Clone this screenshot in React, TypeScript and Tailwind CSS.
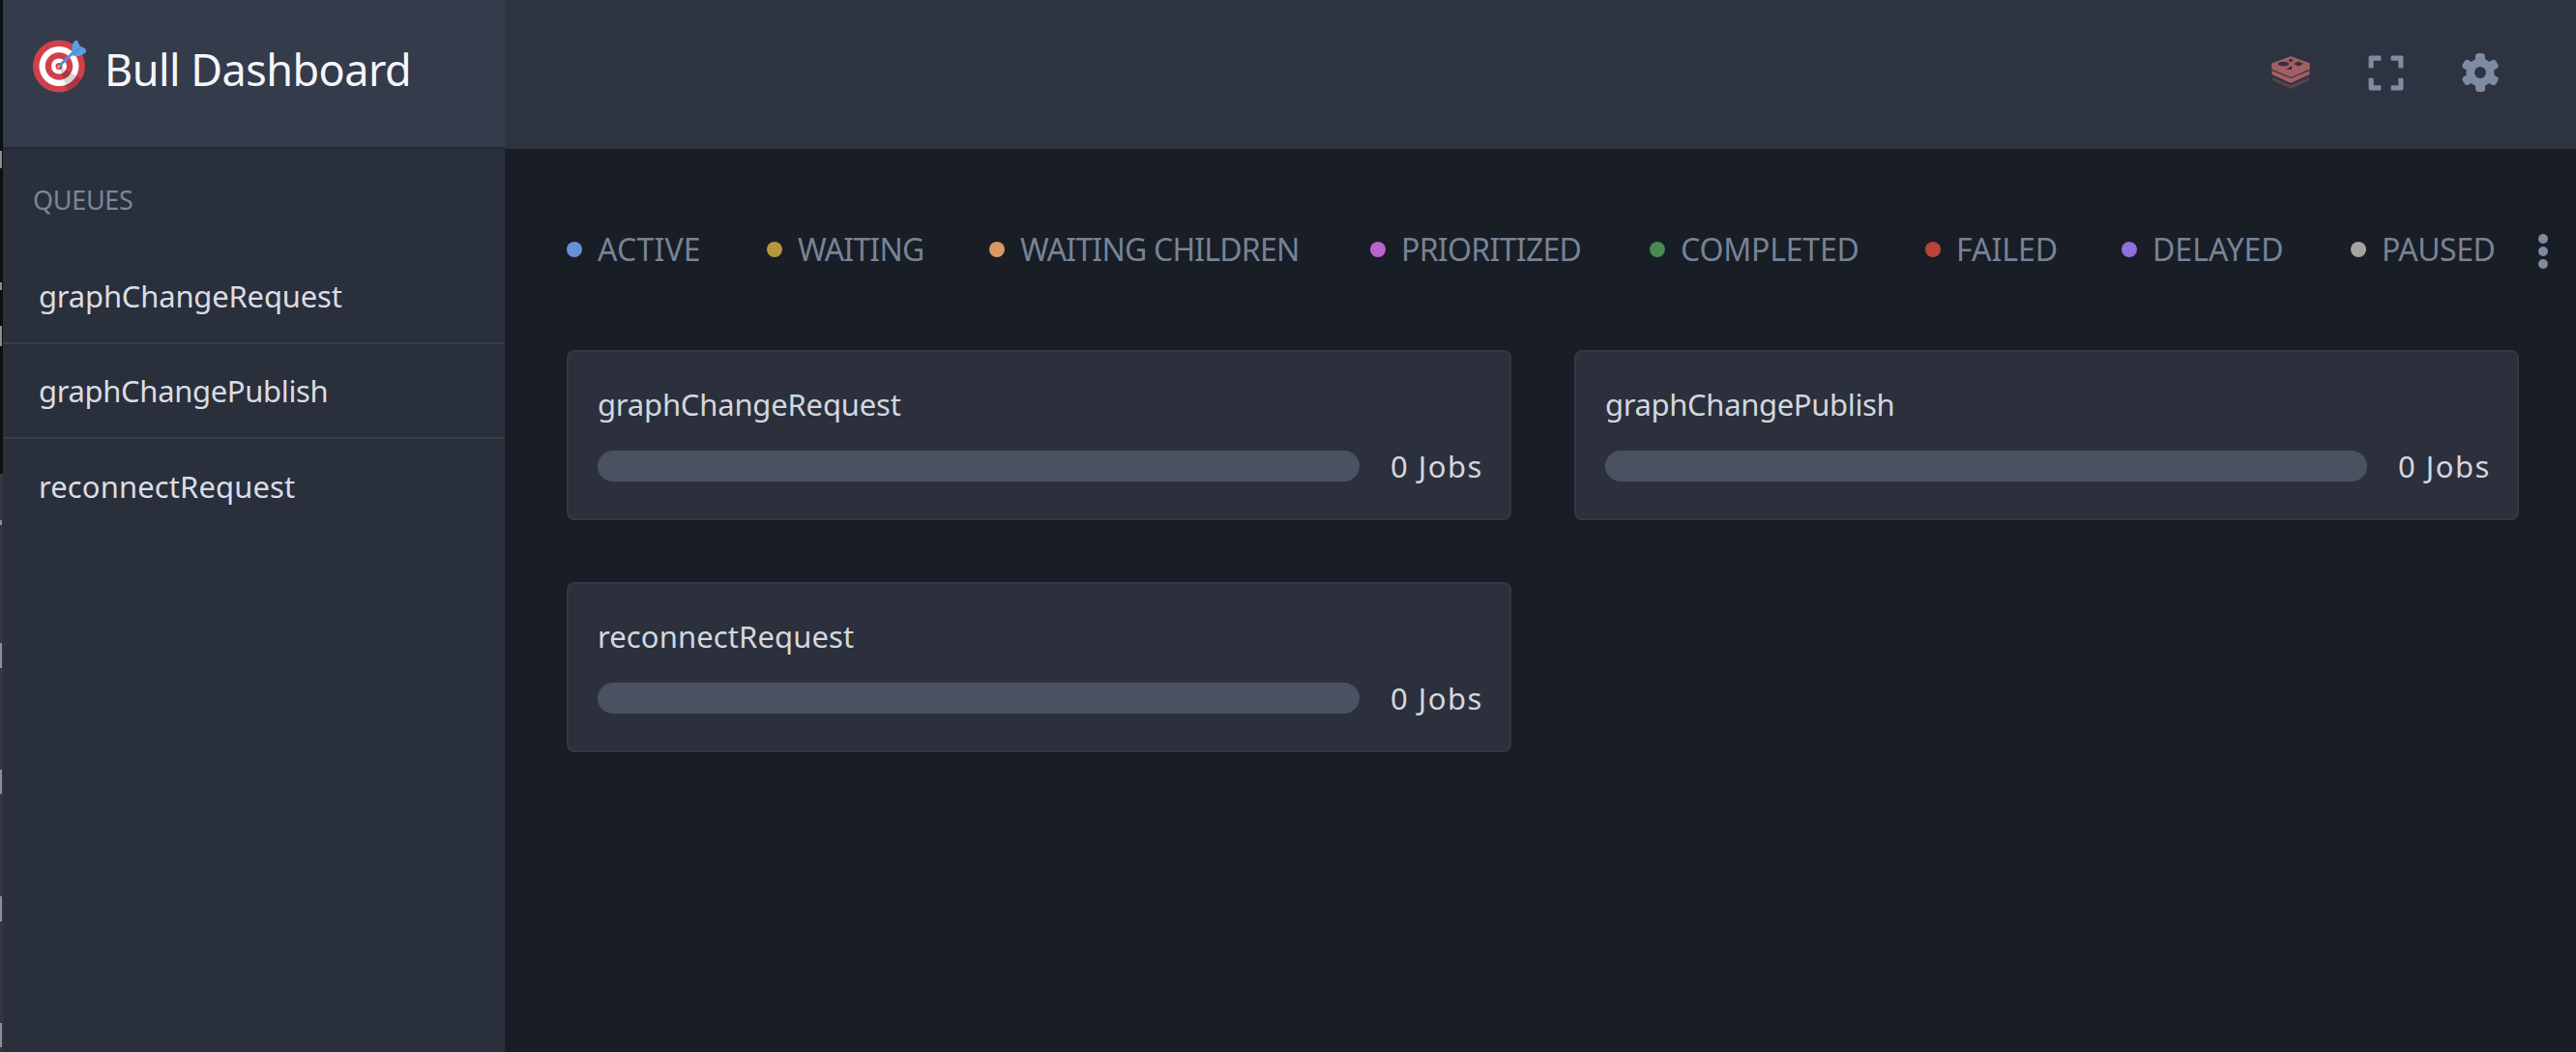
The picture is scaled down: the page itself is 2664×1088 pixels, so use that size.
import React from 'react';
import { FaExpand } from 'react-icons/fa';

const font = { fontFamily: '"Noto Sans", sans-serif' };

const statuses = [
  { label: 'ACTIVE', dot: 'bg-[#6790d8]', box: 'w-[207px] tracking-[0.2px]' },
  { label: 'WAITING', dot: 'bg-[#b8973c]', box: 'w-[230px] tracking-[-0.8px]' },
  { label: 'WAITING CHILDREN', dot: 'bg-[#d89a60]', box: 'w-[394px] tracking-[-0.8px]' },
  { label: 'PRIORITIZED', dot: 'bg-[#b866cc]', box: 'w-[289px] tracking-[-0.7px]' },
  { label: 'COMPLETED', dot: 'bg-[#4a8a50]', box: 'w-[285px] tracking-[-0.2px]' },
  { label: 'FAILED', dot: 'bg-[#b8443c]', box: 'w-[203px]' },
  { label: 'DELAYED', dot: 'bg-[#9070dc]', box: 'w-[237px]' },
  { label: 'PAUSED', dot: 'bg-[#a8a29e]', box: 'w-[194px] tracking-[-0.5px]' },
];

const queues = [
  { name: 'graphChangeRequest', track: 'tracking-[-0.2px]' },
  { name: 'graphChangePublish', track: 'tracking-[-0.35px]' },
  { name: 'reconnectRequest', track: 'tracking-[0.1px]' },
];

const ticks = [
  'top-[156px] h-[18px]',
  'top-[292px] h-2',
  'top-[337px] h-[21px]',
  'top-[538px] h-[5px]',
  'top-[665px] h-[26px]',
  'top-[796px] h-[25px]',
  'top-[927px] h-[26px]',
  'top-[1058px] h-[25px]',
];

function Logo() {
  return (
    <svg viewBox="0 0 55 55" className="mb-[15px] h-[55px] w-[55px] shrink-0">
      <circle cx="27" cy="27.5" r="27" fill="#d03f4b" />
      <circle cx="27" cy="27.5" r="20.5" fill="#ffffff" />
      <circle cx="27" cy="27.5" r="14.2" fill="#d03f4b" />
      <circle cx="27" cy="27.5" r="8" fill="#ffffff" />
      <circle cx="27" cy="27.5" r="3.5" fill="#d03f4b" />
      <path d="M27 27.5 L50.4 41 A27 27 0 0 1 36.2 52.9 Z" fill="#000000" opacity="0.17" />
      <path d="M27 27.5 L41 14" stroke="#4f90d8" strokeWidth="3" strokeLinecap="round" />
      <path d="M40 13 L41 5 Q43 0 46 1 L49 7 L54 9 Q56 12 54 14 L48 17 L42 17 Z" fill="#5a9fe2" />
      <path d="M41 15 L51 7" stroke="#4a8cd0" strokeWidth="1.5" />
      <circle cx="26.5" cy="28" r="1.5" fill="#f0a030" />
    </svg>
  );
}

function RedisIcon() {
  return (
    <svg viewBox="0 0 40 34" className="h-[34px] w-10">
      <path d="M1 22 L20 30 L39 22 V25 L20 34 L1 25 Z" fill="#574444" strokeLinejoin="round" />
      <path d="M0.5 15 L20 23 L39.5 15 V19 L20 28 L0.5 19 Z" fill="#a35f64" strokeLinejoin="round" />
      <path d="M1 8 L20 1 L39 8 V13 L20 21 L1 13 Z" fill="#a35f64" stroke="#a35f64" strokeWidth="1.5" strokeLinejoin="round" />
      <ellipse cx="12.5" cy="8" rx="5.5" ry="2.3" fill="#2d3341" />
      <path d="M20 2.5 L22.5 4.5 L20 6.5 L17.5 4.5 Z" fill="#2d3341" />
      <path d="M28 5.5 L33 8 L28 10.5 L23 8 Z" fill="#2d3341" />
      <path d="M21 10 L21 14 L15 14 Z" fill="#2d3341" />
    </svg>
  );
}

function GearIcon() {
  return (
    <svg viewBox="1 0 38 40" className="h-10 w-[38px] text-[#7e8ba0]" fill="currentColor">
      {[0, 60, 120, 180, 240, 300].map(a => (
        <rect key={a} x="15" y="0" width="10" height="14" rx="3.5" transform={`rotate(${a} 20 20)`} />
      ))}
      <circle cx="20" cy="20" r="14.5" />
      <circle cx="20" cy="20" r="6" fill="#2d3341" />
    </svg>
  );
}

function QueueCard({ name, track }: { name: string; track: string }) {
  return (
    <div className="h-[176px] rounded-lg border-2 border-[#323845] bg-[#2b303c] pl-[30px] pr-[31px] pt-[30px]">
      <div className={`text-[31px] leading-[48px] text-[#d3d7de] ${track}`}>{name}</div>
      <div className="mt-[24px] flex items-center gap-8">
        <div className="h-8 flex-1 rounded-2xl bg-[#4a5160]" />
        <div className="w-[92px] text-[31px] leading-8 tracking-[1.5px] whitespace-nowrap text-[#d3d7de]">0 Jobs</div>
      </div>
    </div>
  );
}

export default function App() {
  return (
    <div className="flex h-[1088px] w-[2664px] overflow-hidden bg-[#191d25]" style={font}>
      <div className="relative flex w-[3px] shrink-0 flex-col">
        <div className="h-[490px] bg-[#0c0e12]" />
        <div className="flex-1 bg-[#33363d]" />
        {ticks.map(t => (
          <span key={t} className={`absolute left-0 w-[2px] bg-[#8a8f94] ${t}`} />
        ))}
      </div>
      <div className="flex w-[519px] shrink-0 flex-col bg-[#2a2f3c]">
        <div className="flex h-[154px] items-center gap-[19px] border-b-2 border-[#222631] bg-[#343b4b] pl-[31px]">
          <Logo />
          <div className="mb-[9px] text-[45px] leading-none tracking-[-0.55px] text-[#f4f6f9]">Bull Dashboard</div>
        </div>
        <div className="pl-[31px] pt-[37px] text-[27px] leading-8 tracking-[-0.3px] text-[#7b8694]">QUEUES</div>
        <div className="mt-[35px]">
          {queues.map((q, i) => (
            <div key={q.name} className={`flex h-[98px] items-center pl-[37px] text-[31px] text-[#d9dde3] ${q.track} ${i < 2 ? 'border-b-2 border-[#393e4a]' : ''}`}>
              {q.name}
            </div>
          ))}
        </div>
      </div>
      <div className="flex min-w-0 flex-1 flex-col">
        <div className="flex h-[154px] items-center justify-end gap-[58px] bg-[#2d3341] pb-1 pr-[80px]">
          <RedisIcon />
          <FaExpand className="h-[41px] w-[41px] text-[#7e8ba0]" />
          <GearIcon />
        </div>
        <div className="pl-[64px]">
          <div className="mt-[88px] flex h-8 items-center">
            {statuses.map(s => (
              <div key={s.label} className={`flex shrink-0 items-center gap-4 text-[32px] whitespace-nowrap text-[#768397] ${s.box}`}>
                <span className={`h-4 w-4 rounded-full ${s.dot}`} />
                {s.label}
              </div>
            ))}
            <div className="mt-[3px] flex flex-col gap-[3px]">
              <span className="h-[10px] w-[10px] rounded-full bg-[#7e8ba0]" />
              <span className="h-[10px] w-[10px] rounded-full bg-[#7e8ba0]" />
              <span className="h-[10px] w-[10px] rounded-full bg-[#7e8ba0]" />
            </div>
          </div>
          <div className="mt-[88px] grid w-[2019px] grid-cols-2 gap-x-[65px] gap-y-16">
            {queues.map(q => (
              <QueueCard key={q.name} name={q.name} track={q.track} />
            ))}
          </div>
        </div>
      </div>
    </div>
  );
}
